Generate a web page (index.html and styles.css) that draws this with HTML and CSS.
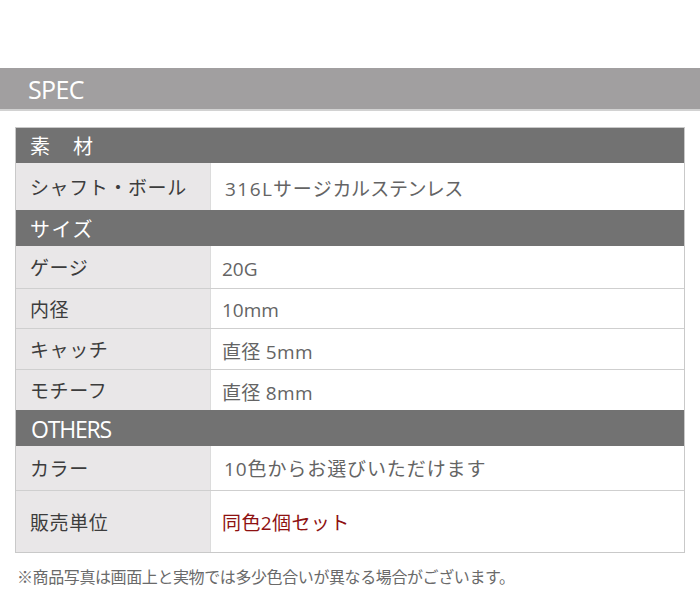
FILE: index.html
```html
<!DOCTYPE html>
<html lang="ja">
<head>
<meta charset="utf-8">
<link rel="stylesheet" href="styles.css">
</head>
<body>
<div class="page">
  <h2 class="spec-bar">SPEC</h2>
  <div class="spec">
    <div class="head h-first">素　材</div>
    <div class="row r-shaft"><div class="lbl">シャフト・ボール</div><div class="val v-kata">316Lサージカルステンレス</div></div>
    <div class="head">サイズ</div>
    <div class="row r-gauge"><div class="lbl">ゲージ</div><div class="val">20G</div></div>
    <div class="row r-inner sep"><div class="lbl">内径</div><div class="val">10mm</div></div>
    <div class="row r-catch sep"><div class="lbl">キャッチ</div><div class="val v-dia">直径 5mm</div></div>
    <div class="row r-motif sep"><div class="lbl">モチーフ</div><div class="val v-dia">直径 8mm</div></div>
    <div class="head head-en">OTHERS</div>
    <div class="row r-color"><div class="lbl">カラー</div><div class="val v-hira">10色からお選びいただけます</div></div>
    <div class="row r-unit sep"><div class="lbl">販売単位</div><div class="val red">同色2個セット</div></div>
  </div>
  <p class="note">※商品写真は画面上と実物では多少色合いが異なる場合がございます。</p>
</div>
</body>
</html>
```

FILE: styles.css
```css
html, body {
  margin: 0;
  padding: 0;
  background: #ffffff;
}
body {
  font-family: "Open Sans", "Noto Sans CJK JP", sans-serif;
}
.page {
  padding-top: 68px;
}
.spec-bar {
  margin: 0;
  height: 41px;
  line-height: 43px;
  background: #a19fa0;
  border-bottom: 2px solid #d2d2d2;
  color: #ffffff;
  font-weight: 400;
  font-size: 25px;
  padding-left: 28px;
  letter-spacing: -0.6px;
}
.spec {
  box-sizing: border-box;
  margin: 16px 0 0 15px;
  width: 670px;
  border: 1px solid #c9c9c9;
}
.head {
  box-sizing: border-box;
  height: 36px;
  background: #727272;
  color: #ffffff;
  font-size: 20px;
  letter-spacing: 1.5px;
  padding-left: 14px;
  display: flex;
  align-items: center;
}
.h-first {
  height: 35px;
}
.head-en {
  font-size: 23px;
  letter-spacing: -1.2px;
  padding-left: 15px;
  padding-top: 1px;
}
.row {
  box-sizing: border-box;
  display: grid;
  grid-template-columns: 195px 1fr;
}
.sep {
  border-top: 1px solid #cfcfcf;
}
.lbl {
  box-sizing: border-box;
  background: #e9e7e8;
  color: #3c3c3c;
  font-size: 19px;
  letter-spacing: 0.6px;
  padding-left: 14px;
  border-right: 1px solid #dcdcdc;
  display: flex;
  align-items: center;
}
.val {
  color: #646464;
  font-size: 19px;
  padding-left: 11px;
  display: flex;
  align-items: center;
}
.v-kata {
  font-feature-settings: "palt" 1;
  letter-spacing: 1.5px;
  padding-left: 14px;
}
.v-dia {
  letter-spacing: 0.3px;
}
.v-hira {
  letter-spacing: 0.9px;
  padding-left: 13px;
}
.red {
  color: #8e1111;
  letter-spacing: 0.4px;
}
.r-shaft { height: 47px; }
.r-gauge { height: 42px; }
.r-inner { height: 40px; }
.r-catch { height: 41px; }
.r-motif { height: 41px; }
.r-color { height: 44px; }
.r-unit { height: 62px; }
.r-gauge .val, .r-inner .val, .r-catch .val, .r-motif .val, .r-shaft .val {
  padding-top: 3px;
}
.note {
  margin: 14px 0 0 17px;
  font-size: 16px;
  line-height: 20px;
  color: #6a6a6a;
  letter-spacing: -0.4px;
}
```
